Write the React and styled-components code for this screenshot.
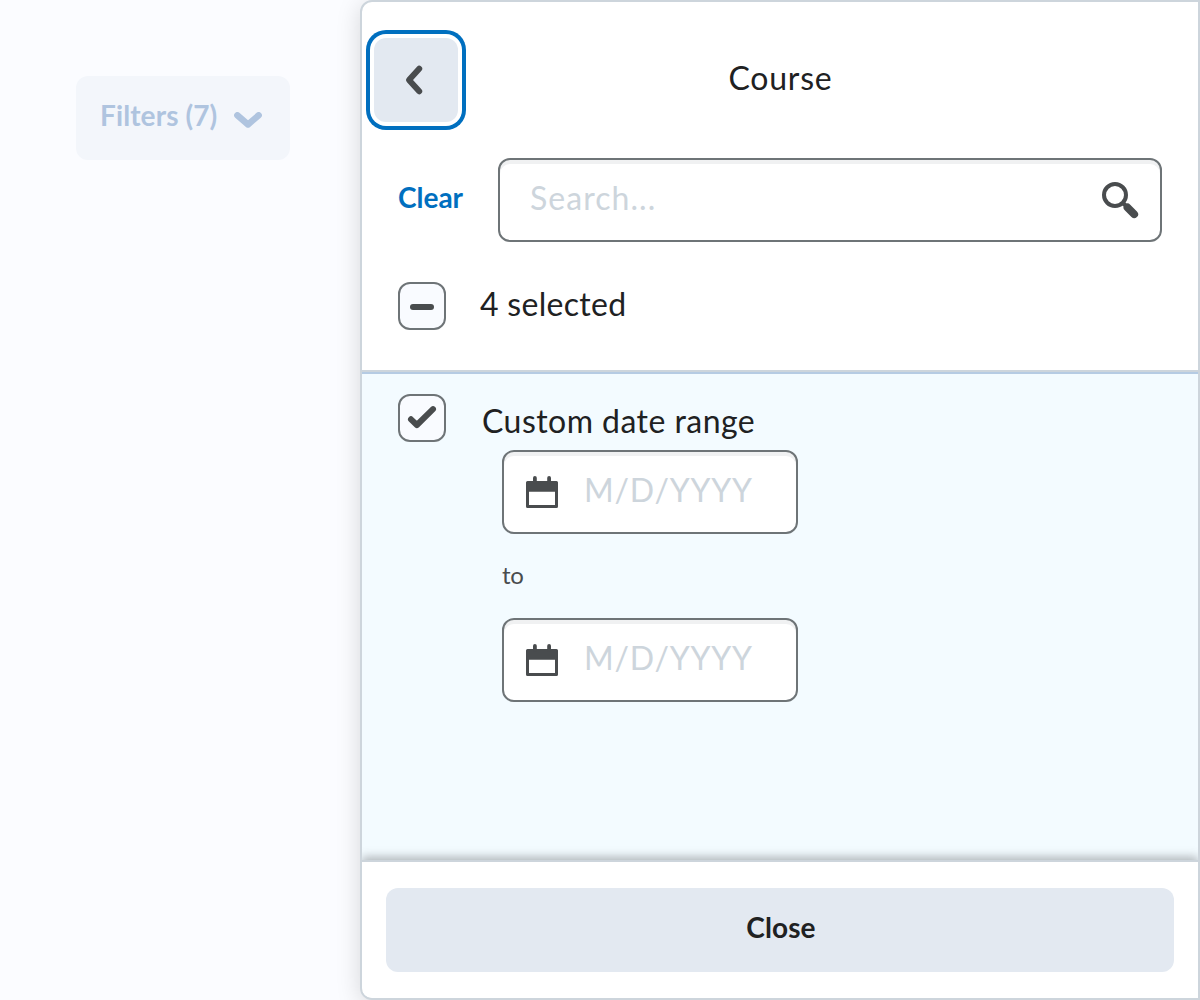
import React from "react";
import styled, { createGlobalStyle } from "styled-components";

const GlobalStyle = createGlobalStyle`
  *, *::before, *::after { box-sizing: border-box; }
  body {
    margin: 0;
    background: #fbfcff;
    color: #202122;
    font-family: Lato, "Open Sans", sans-serif;
    font-size: 32px;
    letter-spacing: 0.8px;
    line-height: 48px;
  }
`;

const Page = styled.div`
  display: flex;
  width: 1200px;
  height: 1000px;
  overflow: hidden;
`;

const Backdrop = styled.main`
  flex: 0 0 360px;
  padding: 76px 70px 0 76px;
`;

const Button = styled.button`
  display: flex;
  align-items: center;
  justify-content: center;
  height: 84px;
  margin: 0;
  padding: 0 24px;
  border: 0;
  border-radius: 12px;
  background: #e3e9f1;
  color: #202122;
  font: 700 28px/40px Lato, "Open Sans", sans-serif;
  letter-spacing: 0.1px;
`;

const OpenerButton = styled(Button)`
  width: 214px;
  justify-content: flex-start;
  gap: 17px;
  background: #f3f6fb;
  color: #afc4df;
  padding-bottom: 6px;

  svg { margin-top: 10px; flex: none; }
`;

const BackButton = styled(Button)`
  flex: none;
  width: 84px;
  padding: 0;
  outline: none;
  box-shadow: 0 0 0 4px #fff, 0 0 0 8px #006fbf;
`;

const CloseButton = styled(Button)`
  width: 100%;
  padding: 0 24px 6px 26px;
`;

const ClearButton = styled(Button)`
  height: auto;
  width: 64px;
  padding: 0 0 6px 1px;
  background: none;
  color: #006fbf;
  letter-spacing: 0;
  white-space: nowrap;
`;

const Panel = styled.section`
  display: flex;
  flex-direction: column;
  flex: 0 0 840px;
  border: 2px solid #cdd5dc;
  border-radius: 12px 0 0 12px;
  background: #fff;
  box-shadow: 0 4px 24px rgba(0, 0, 0, 0.15);
  overflow: hidden;
`;

const Header = styled.header`
  flex: 0 0 370px;
  padding-top: 36px;
  border-bottom: 2px solid #cdd5dc;
`;

const TitleRow = styled.div`
  display: grid;
  grid-template-columns: 84px 1fr 84px;
  align-items: center;
  padding: 0 12px;
`;

const Title = styled.h1`
  margin: 0;
  padding: 0 0 4px 1px;
  font: inherit;
  text-align: center;
`;

const SearchRow = styled.div`
  display: flex;
  align-items: center;
  gap: 36px;
  padding: 36px 36px 0;
`;

const Field = styled.div`
  display: flex;
  align-items: center;
  height: 84px;
  border: 2px solid #6e7477;
  border-radius: 12px;
  background: #fff;
  box-shadow: inset 0 4px 0 #f0f1f2;

  svg { flex: none; }
`;

const SearchField = styled(Field)`
  flex: 1;
  padding: 0 20px 0 30px;
`;

const DateField = styled(Field)`
  width: 296px;
  padding: 0 20px;
  gap: 24px;
`;

const Input = styled.input`
  flex: 1;
  min-width: 0;
  height: 48px;
  margin: 0 0 4px;
  padding: 0;
  border: 0;
  outline: 0;
  background: none;
  font: inherit;
  letter-spacing: ${(p) => p.$tracking}px;
  color: #202122;

  &::placeholder { color: #cdd5dc; opacity: 1; }
`;

const CheckRow = styled.div`
  display: flex;
  align-items: center;
  gap: ${(p) => p.$gap}px;
  padding: ${(p) => p.$top}px 36px 0;
`;

const Checkbox = styled.span`
  display: flex;
  align-items: center;
  justify-content: center;
  flex: none;
  width: 48px;
  height: 48px;
  border: 2px solid #6e7477;
  border-radius: 12px;
  background: #f9fbff;
`;

const Label = styled.span`
  margin-top: ${(p) => p.$shift}px;
  margin-bottom: ${(p) => -p.$shift}px;
  letter-spacing: ${(p) => p.$tracking}px;
`;

const Options = styled.div`
  flex: 1;
  border-top: 2px solid #b5cbe3;
  background: #f3fbff;
`;

const DateRange = styled.div`
  display: flex;
  flex-direction: column;
  padding: 8px 0 0 140px;
`;

const To = styled.span`
  height: 84px;
  color: #494c4e;
  font-size: 24px;
  line-height: 82px;
  letter-spacing: -0.2px;
`;

const Footer = styled.footer`
  flex: 0 0 138px;
  padding: 26px 24px;
  border-top: 2px solid #cdd5dc;
  background: #fff;
  box-shadow: 0 -3px 9px rgba(73, 76, 78, 0.4);
`;

const ChevronDown = () => (
  <svg width="28" height="16" viewBox="0 0 28 16" fill="none" stroke="currentColor" strokeWidth="6.4" strokeLinecap="round" strokeLinejoin="round">
    <path d="M3.3 3.3 14 12.5 24.7 3.3" />
  </svg>
);

const ChevronLeft = () => (
  <svg width="36" height="36" viewBox="0 0 36 36" fill="none" stroke="#494c4e" strokeWidth="6" strokeLinecap="round" strokeLinejoin="round">
    <path d="M21.200 6.800 11 18l10.200 11.200" />
  </svg>
);

const SearchIcon = () => (
  <svg width="40" height="40" viewBox="0 0 40 40" fill="none" stroke="#494c4e">
    <circle cx="15" cy="15" r="11" strokeWidth="4" />
    <path d="m22 22 6 6" strokeWidth="4" />
    <path d="m27.500 27.500 6.700 6.700" strokeWidth="7.800" strokeLinecap="round" />
  </svg>
);

const CalendarIcon = () => (
  <svg width="36" height="36" viewBox="0 0 36 36" fill="#494c4e">
    <path fillRule="evenodd" d="M3.500 7h29A1.500 1.500 0 0 1 34 8.500v24a1.500 1.500 0 0 1-1.500 1.500h-29A1.500 1.500 0 0 1 2 32.500v-24A1.500 1.500 0 0 1 3.500 7ZM5 17.700V31h26V17.700Z" />
    <rect x="9" y="2" width="3.800" height="8" rx="1.900" />
    <rect x="23.200" y="2" width="3.800" height="8" rx="1.900" />
  </svg>
);

const MinusIcon = () => (
  <svg width="24" height="8" viewBox="0 0 24 8">
    <rect y="2" width="24" height="6" rx="3" fill="#494c4e" />
  </svg>
);

const CheckIcon = () => (
  <svg width="44" height="44" viewBox="0 0 44 44" fill="none" stroke="#494c4e" strokeWidth="6" strokeLinecap="round" strokeLinejoin="round">
    <path d="m11 23.300 5.900 5.700L33 13.200" />
  </svg>
);

function DateInput({ label }) {
  return (
    <DateField>
      <CalendarIcon />
      <Input placeholder="M/D/YYYY" aria-label={label} $tracking={0.75} />
    </DateField>
  );
}

export default function App() {
  return (
    <Page>
      <GlobalStyle />
      <Backdrop>
        <OpenerButton>
          Filters (7)
          <ChevronDown />
        </OpenerButton>
      </Backdrop>
      <Panel>
        <Header>
          <TitleRow>
            <BackButton aria-label="Back">
              <ChevronLeft />
            </BackButton>
            <Title>Course</Title>
          </TitleRow>
          <SearchRow>
            <ClearButton>Clear</ClearButton>
            <SearchField>
              <Input placeholder="Search..." aria-label="Search" $tracking={1.05} />
              <SearchIcon />
            </SearchField>
          </SearchRow>
          <CheckRow $gap={34} $top={40}>
            <Checkbox role="checkbox" aria-checked="mixed">
              <MinusIcon />
            </Checkbox>
            <Label $shift={-2} $tracking={0.3}>4 selected</Label>
          </CheckRow>
        </Header>
        <Options>
          <CheckRow $gap={36} $top={20}>
            <Checkbox role="checkbox" aria-checked="true">
              <CheckIcon />
            </Checkbox>
            <Label $shift={3} $tracking={0.46}>Custom date range</Label>
          </CheckRow>
          <DateRange>
            <DateInput label="Start date" />
            <To>to</To>
            <DateInput label="End date" />
          </DateRange>
        </Options>
        <Footer>
          <CloseButton>Close</CloseButton>
        </Footer>
      </Panel>
    </Page>
  );
}
